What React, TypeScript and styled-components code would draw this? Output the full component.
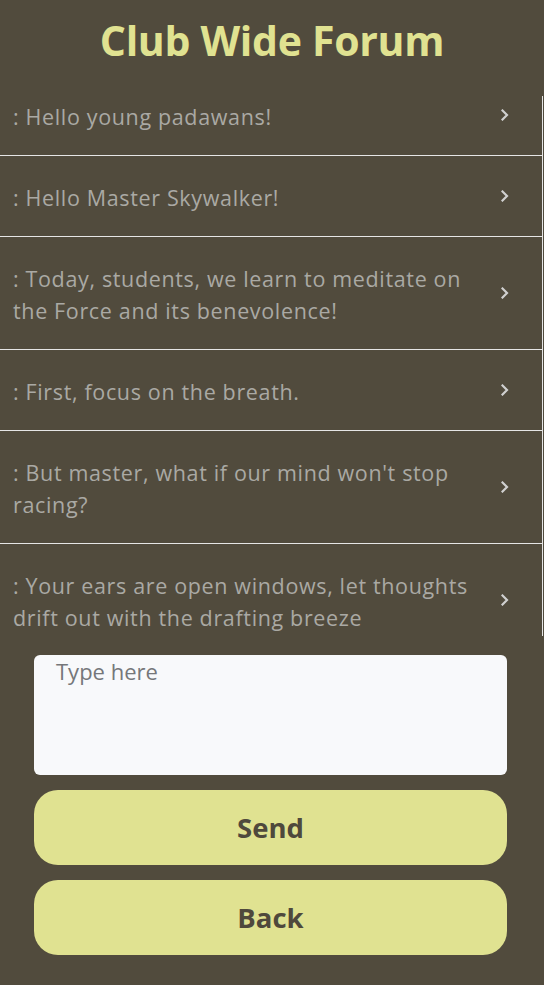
import React from "react";
import styled, { createGlobalStyle } from "styled-components";

const Global = createGlobalStyle`
  html, body { margin: 0; padding: 0; background: #514b3d; }
  body { font-family: "Open Sans", "Noto Sans", sans-serif; }
  * { box-sizing: border-box; }
`;

const Page = styled.div`
  width: 544px;
  height: 985px;
  background: #514b3d;
  display: flex;
  flex-direction: column;
  overflow: hidden;
`;

const Title = styled.h1`
  margin: 0;
  height: 96px;
  padding-top: 12px;
  text-align: center;
  font-size: 41px;
  line-height: 56px;
  font-weight: 700;
  color: #e0e291;
  letter-spacing: -0.3px;
`;

const ListWrap = styled.div`
  width: 543px;
  height: 540px;
  border-right: 1px solid #e6e6e6;
  overflow: hidden;
`;

const List = styled.div<{ $scroll: number }>`
  margin-top: ${(p) => -p.$scroll}px;
`;

const Row = styled.div`
  display: flex;
  align-items: center;
  padding: 26px 20px 22px 13px;
  border-bottom: 1px solid #e6e6e6;
`;

const Msg = styled.div`
  flex: 1;
  font-size: 21.5px;
  letter-spacing: 0.65px;
  line-height: 32px;
  color: #aaa9a4;
`;

const Chevron = styled.div`
  width: 34px;
  display: flex;
  justify-content: center;
  margin-top: -4px;
  color: #d0d0d0;
`;

const Form = styled.div`
  display: flex;
  flex-direction: column;
  gap: 15px;
  padding: 19px 37px 0 34px;
`;

const Input = styled.textarea`
  width: 473px;
  height: 120px;
  border: none;
  border-radius: 6px;
  background: #f8f9fb;
  padding: 0 22px;
  font-family: "Open Sans", "Noto Sans", sans-serif;
  font-size: 22px;
  line-height: 32px;
  color: #333;
  resize: none;
  outline: none;
  &::placeholder { color: #75777a; }
`;

const Button = styled.button`
  width: 473px;
  height: 75px;
  border: none;
  border-radius: 24px;
  background: #e0e291;
  color: #4f493c;
  font-family: "Open Sans", "Noto Sans", sans-serif;
  font-weight: 700;
  font-size: 27.5px;
  cursor: pointer;
`;

const messages = [
  ": Hello young padawans!",
  ": Hello Master Skywalker!",
  ": Today, students, we learn to meditate on the Force and its benevolence!",
  ": First, focus on the breath.",
  ": But master, what if our mind won't stop racing?",
  ": Your ears are open windows, let thoughts drift out with the drafting breeze",
];

const ChevronIcon = () => (
  <svg width="8" height="12" viewBox="0 0 8 12" fill="none">
    <path d="M1.5 1.5 L6 6 L1.5 10.5" stroke="currentColor" strokeWidth="2.2" strokeLinecap="square" />
  </svg>
);

export default function App() {
  return (
    <Page>
      <Global />
      <Title>Club Wide Forum</Title>
      <ListWrap>
        <List $scroll={21}>
          {messages.map((m, i) => (
            <Row key={i}>
              <Msg>{m}</Msg>
              <Chevron>
                <ChevronIcon />
              </Chevron>
            </Row>
          ))}
        </List>
      </ListWrap>
      <Form>
        <Input placeholder="Type here" />
        <Button>Send</Button>
        <Button>Back</Button>
      </Form>
    </Page>
  );
}
